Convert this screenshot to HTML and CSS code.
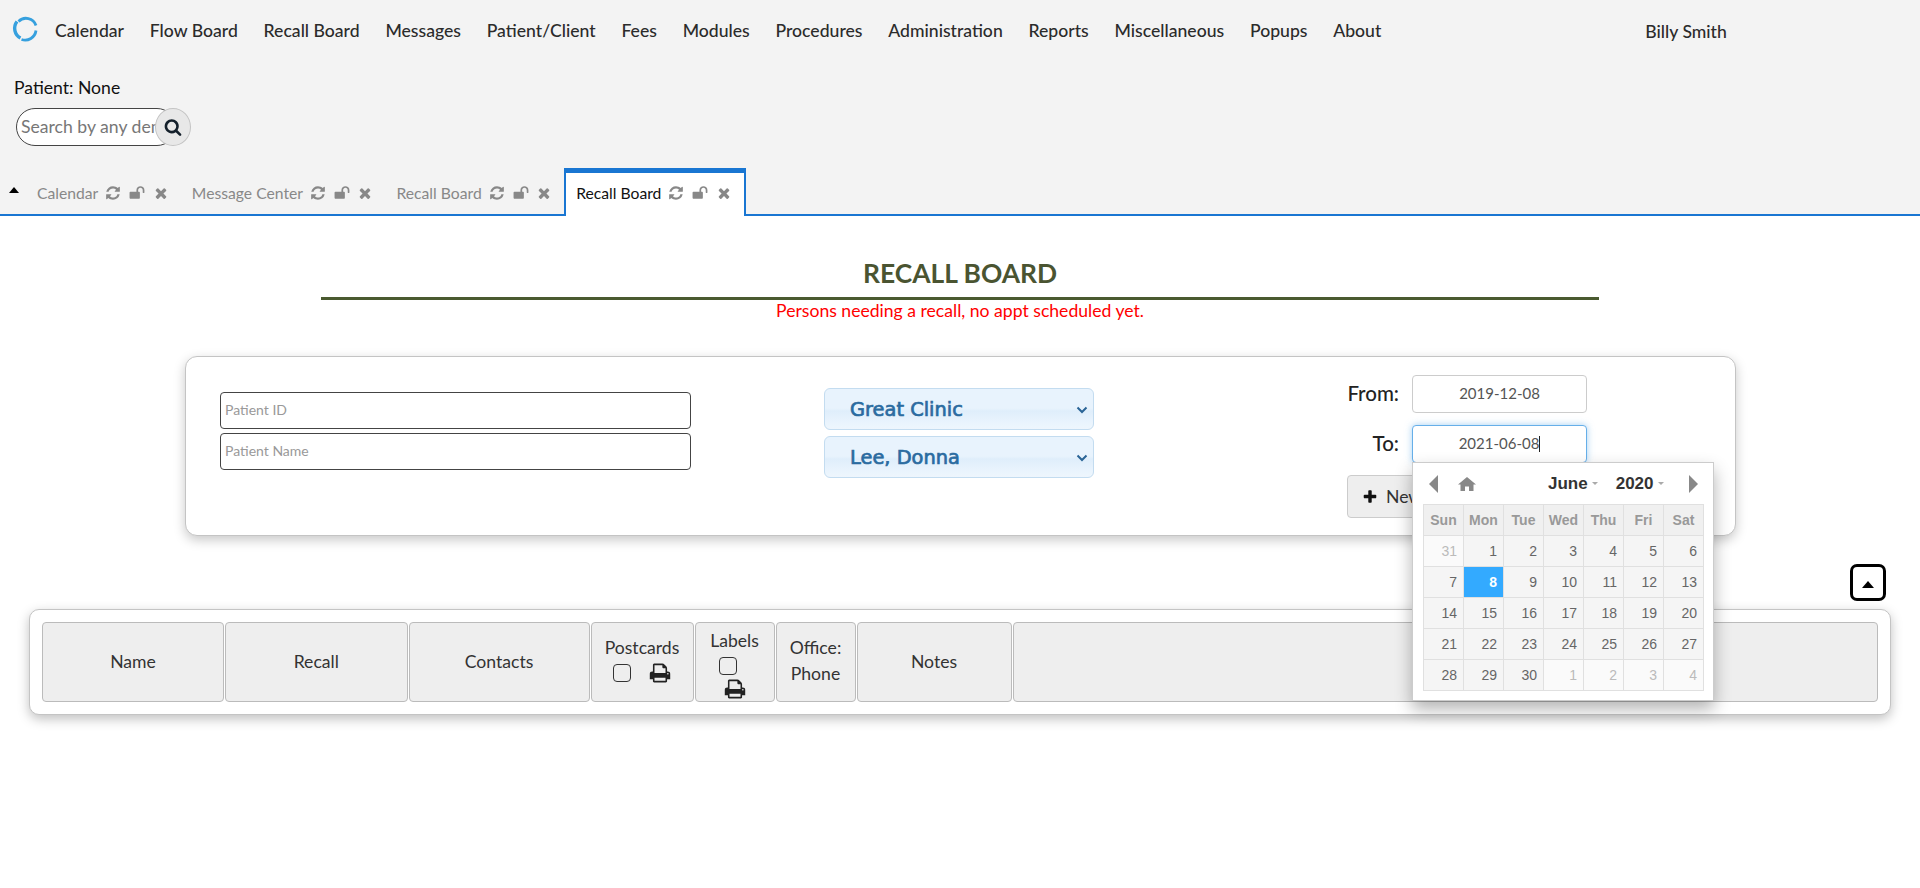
FILE: index.html
```html
<!DOCTYPE html>
<html lang="en">
<head>
<meta charset="utf-8">
<title>Recall Board</title>
<link rel="stylesheet" href="styles.css">
</head>
<body>
<svg class="defs" aria-hidden="true">
  <symbol id="i-refresh" viewBox="0 0 1792 1792"><path d="M1639 1056q0 5-1 7-64 268-268 434.5t-478 166.5q-146 0-282.5-55t-243.5-157l-129 129q-19 19-45 19t-45-19-19-45v-448q0-26 19-45t45-19h448q26 0 45 19t19 45-19 45l-137 137q71 66 161 102t187 36q134 0 250-65t186-179q11-17 53-117 8-23 30-23h192q13 0 22.5 9.5t9.5 22.5zm25-800v448q0 26-19 45t-45 19h-448q-26 0-45-19t-19-45 19-45l138-138q-148-137-349-137-134 0-250 65t-186 179q-11 17-53 117-8 23-30 23h-199q-13 0-22.5-9.5t-9.5-22.5v-7q65-268 270-434.5t480-166.5q146 0 284 55.5t245 156.5l130-129q19-19 45-19t45 19 19 45z"/></symbol>
  <symbol id="i-unlock" viewBox="0 0 1792 1792"><path d="M1728 576v256q0 26-19 45t-45 19h-64q-26 0-45-19t-19-45v-256q0-106-75-181t-181-75-181 75-75 181v192h96q40 0 68 28t28 68v576q0 40-28 68t-68 28h-960q-40 0-68-28t-28-68v-576q0-40 28-68t68-28h672v-192q0-185 131.5-316.5t316.5-131.5 316.5 131.5 131.5 316.5z"/></symbol>
  <symbol id="i-times" viewBox="0 0 1792 1792"><path d="M1490 1322q0 40-28 68l-136 136q-28 28-68 28t-68-28l-294-294-294 294q-28 28-68 28t-68-28l-136-136q-28-28-28-68t28-68l294-294-294-294q-28-28-28-68t28-68l136-136q28-28 68-28t68 28l294 294 294-294q28-28 68-28t68 28l136 136q28 28 28 68t-28 68l-294 294 294 294q28 28 28 68z"/></symbol>
  <symbol id="i-search" viewBox="0 0 1792 1792"><path d="M1216 832q0-185-131.5-316.5t-316.5-131.5-316.5 131.5-131.5 316.5 131.5 316.5 316.5 131.5 316.5-131.5 131.5-316.5zm512 832q0 52-38 90t-90 38q-54 0-90-38l-343-342q-179 124-399 124-143 0-273.5-55.5t-225-150-150-225-55.5-273.5 55.5-273.5 150-225 225-150 273.5-55.5 273.5 55.5 225 150 150 225 55.5 273.5q0 220-124 399l343 343q37 37 37 90z"/></symbol>
  <symbol id="i-print" viewBox="0 0 1792 1792"><path d="M448 1536h896v-256h-896v256zm0-640h896v-384h-160q-40 0-68-28t-28-68v-160h-640v640zm1152 64q0-26-19-45t-45-19-45 19-19 45 19 45 45 19 45-19 19-45zm128 0v416q0 13-9.5 22.5t-22.5 9.5h-224v160q0 40-28 68t-68 28h-960q-40 0-68-28t-28-68v-160h-224q-13 0-22.5-9.5t-9.5-22.5v-416q0-79 56.5-135.5t135.5-56.5h64v-544q0-40 28-68t68-28h672q40 0 88 20t76 48l152 152q28 28 48 76t20 88v256h64q79 0 135.5 56.5t56.5 135.5z"/></symbol>
  <symbol id="i-plus" viewBox="0 0 1792 1792"><path d="M1600 736v192q0 40-28 68t-68 28h-416v416q0 40-28 68t-68 28h-192q-40 0-68-28t-28-68v-416h-416q-40 0-68-28t-28-68v-192q0-40 28-68t68-28h416v-416q0-40 28-68t68-28h192q40 0 68 28t28 68v416h416q40 0 68 28t28 68z"/></symbol>
</svg>

<header class="top">
  <nav class="nav">
    <svg class="logo" viewBox="0 0 26 26"><g fill="none" stroke="#36a0de"><path d="M6.500 5.500A10.500 10.500 0 0 1 24 9.500" stroke-width="2.800"/><path d="M5 5.500A11 11 0 0 0 8.500 22" stroke-width="3.400"/><path d="M9.500 23.500A11 11 0 0 0 24 14.500" stroke-width="2.800"/></g></svg>
    <ul class="menu">
      <li>Calendar</li><li>Flow Board</li><li>Recall Board</li><li>Messages</li><li>Patient/Client</li><li>Fees</li><li>Modules</li><li>Procedures</li><li>Administration</li><li>Reports</li><li>Miscellaneous</li><li>Popups</li><li>About</li>
    </ul>
    <span class="user">Billy Smith</span>
  </nav>
  <div class="patient">Patient: None</div>
  <div class="search">
    <input class="search-input" type="text" placeholder="Search by any demographics">
    <button class="search-btn" type="button"><svg class="ic-search"><use href="#i-search"/></svg></button>
  </div>
  <div class="tabs">
    <span class="tabs-toggle"></span>
    <div class="tab">Calendar<svg class="ic ic-r"><use href="#i-refresh"/></svg><svg class="ic ic-l"><use href="#i-unlock"/></svg><svg class="ic ic-x"><use href="#i-times"/></svg></div>
    <div class="tab">Message Center<svg class="ic ic-r"><use href="#i-refresh"/></svg><svg class="ic ic-l"><use href="#i-unlock"/></svg><svg class="ic ic-x"><use href="#i-times"/></svg></div>
    <div class="tab">Recall Board<svg class="ic ic-r"><use href="#i-refresh"/></svg><svg class="ic ic-l"><use href="#i-unlock"/></svg><svg class="ic ic-x"><use href="#i-times"/></svg></div>
    <div class="tab tab-active">Recall Board<svg class="ic ic-r"><use href="#i-refresh"/></svg><svg class="ic ic-l"><use href="#i-unlock"/></svg><svg class="ic ic-x"><use href="#i-times"/></svg></div>
  </div>
</header>

<main>
  <div class="title-block">
    <h1 class="title">RECALL BOARD</h1>
    <p class="subtitle">Persons needing a recall, no appt scheduled yet.</p>
  </div>

  <section class="filters">
    <div class="col-patient">
      <input class="text-in" type="text" placeholder="Patient ID">
      <input class="text-in" type="text" placeholder="Patient Name">
    </div>
    <div class="col-select">
      <div class="fake-select">Great Clinic<svg class="chev" viewBox="0 0 12 8"><path d="M1.500 1.500 6 6l4.500-4.500" fill="none" stroke="#2a6496" stroke-width="2"/></svg></div>
      <div class="fake-select">Lee, Donna<svg class="chev" viewBox="0 0 12 8"><path d="M1.500 1.500 6 6l4.500-4.500" fill="none" stroke="#2a6496" stroke-width="2"/></svg></div>
    </div>
    <div class="col-dates">
      <div class="date-row"><label class="date-label">From:</label><div class="date-in">2019-12-08</div></div>
      <div class="date-row date-row-to"><label class="date-label">To:</label><div class="date-in date-in-focus">2021-06-08<span class="cursor"></span></div>
        <div class="cal">
          <div class="cal-head">
            <span class="tri tri-l"></span>
            <svg class="cal-home" viewBox="0 0 18 14"><path d="M9 0 0 7.500h2.500V14h4.500V9.500h4V14h4.500V7.500H18z" fill="#888"/></svg>
            <span class="cal-month">June<span class="mini"></span></span>
            <span class="cal-year">2020<span class="mini"></span></span>
            <span class="tri tri-r"></span>
          </div>
          <table class="cal-table">
            <thead><tr><th>Sun</th><th>Mon</th><th>Tue</th><th>Wed</th><th>Thu</th><th>Fri</th><th>Sat</th></tr></thead>
            <tbody>
              <tr><td class="off">31</td><td>1</td><td>2</td><td>3</td><td>4</td><td>5</td><td>6</td></tr>
              <tr><td>7</td><td class="sel">8</td><td>9</td><td>10</td><td>11</td><td>12</td><td>13</td></tr>
              <tr><td>14</td><td>15</td><td>16</td><td>17</td><td>18</td><td>19</td><td>20</td></tr>
              <tr><td>21</td><td>22</td><td>23</td><td>24</td><td>25</td><td>26</td><td>27</td></tr>
              <tr><td>28</td><td>29</td><td>30</td><td class="off">1</td><td class="off">2</td><td class="off">3</td><td class="off">4</td></tr>
            </tbody>
          </table>
        </div>
      </div>
      <button class="new-btn" type="button"><svg class="ic-plus"><use href="#i-plus"/></svg>New Recall</button>
    </div>
  </section>

  <div class="toggle-row"><button class="toggle-btn" type="button"><span class="toggle-caret"></span></button></div>

  <section class="board">
    <div class="board-head">
      <div class="hc">Name</div>
      <div class="hc">Recall</div>
      <div class="hc">Contacts</div>
      <div class="hc hc-post">
        <span>Postcards</span>
        <span class="hc-tools"><input class="chk" type="checkbox"><svg class="ic-print"><use href="#i-print"/></svg></span>
      </div>
      <div class="hc hc-labels">
        <span>Labels</span>
        <input class="chk" type="checkbox">
        <svg class="ic-print"><use href="#i-print"/></svg>
      </div>
      <div class="hc hc-office">Office:<br>Phone</div>
      <div class="hc">Notes</div>
      <div class="hc"></div>
    </div>
  </section>
</main>
</body>
</html>
```
FILE: styles.css
```css
* { box-sizing: border-box; }
html, body { margin: 0; padding: 0; }
body { font-family: Lato, "Liberation Sans", sans-serif; font-size: 17.6px; color: #212529; background: #fff; height: 888px; overflow: hidden; }
.defs { display: none; }

/* header */
.top { background: #f3f3f3; height: 216px; border-bottom: 2px solid #1976d2; }
.nav { display: flex; align-items: center; height: 62px; padding-left: 12px; }
.logo { width: 26px; height: 26px; margin-top: -4px; }
.menu { display: flex; list-style: none; margin: 0 0 0 17px; padding: 0; gap: 25.800px; }
.menu li { color: #2b2b2b; font-weight: 500; white-space: nowrap; line-height: 24px; }
.user { margin-left: 264px; font-weight: 500; color: #2b2b2b; }
.patient { margin: 14px 0 0 14px; line-height: 24px; height: 24px; color: #111; }
.search { display: flex; margin: 8px 0 0 16px; height: 38px; }
.search-input { width: 160px; height: 38px; border: 1px solid #444; border-radius: 19px; padding: 0 4px 2px 4px; font: 17.6px Lato, sans-serif; background: #fff; outline: none; }
.search-input::placeholder { color: #777; opacity: 1; }
.search-btn { width: 36px; height: 38px; margin: 0 0 0 -21px; border-radius: 50%; border: 1px solid #c4c4c4; background: #e8e8e8; padding: 0; display: flex; align-items: center; justify-content: center; }
.ic-search { width: 18px; height: 18px; fill: #14202b; }

/* tabs */
.tabs { display: flex; align-items: flex-end; height: 46px; margin-top: 22px; padding-left: 26px; }
.tabs-toggle { width: 0; height: 0; border-left: 5.500px solid transparent; border-right: 5.500px solid transparent; border-bottom: 6px solid #000; margin: 0 6px 21px -17px; }
.tab { display: flex; align-items: center; height: 46px; padding: 3px 11px 0 12px; color: #888; font-size: 15.700px; white-space: nowrap; }
.tab-active { height: 48px; margin: 0 0 -2px 1px; padding: 0 12px 4px 10px; background: #fff; color: #111; border: 2px solid #1976d2; border-top-width: 5px; border-bottom: 0; }
.ic { fill: #888; height: 16px; display: block; }
.ic-r { width: 16px; margin-left: 7px; }
.ic-l { width: 16px; margin-left: 8px; }
.ic-x { width: 16px; margin-left: 7.500px; }

/* title */
.title-block { margin: 39px 321px 0; text-align: center; }
.title { margin: 0; font-size: 26.400px; line-height: 36px; height: 45px; font-weight: 700; color: #4a5431; border-bottom: 3px solid #4a5a30; }
.subtitle { margin: 1px 0 0; font-size: 17.6px; line-height: 20px; color: #f00; }

/* filter panel */
.filters { display: flex; align-items: flex-start; height: 180px; margin: 35px 184px 0 185px; padding-left: 34px; border: 1px solid #c4c4c4; border-radius: 12px; background: #fff; box-shadow: 0 4px 12px rgba(0, 0, 0, 0.22); }
.col-patient { display: flex; flex-direction: column; gap: 4px; width: 471px; margin-top: 35px; }
.text-in { width: 471px; height: 37px; border: 1px solid #444; border-radius: 4px; padding: 0 4px 2px; font: 14px Lato, sans-serif; background: #fff; outline: none; }
.text-in::placeholder { color: #999; opacity: 1; }
.col-select { display: flex; flex-direction: column; gap: 6px; width: 270px; margin: 31px 0 0 133px; }
.fake-select { position: relative; height: 42px; padding-left: 25px; border: 1px solid #c3dcf0; border-radius: 6px; font: 19.400px/41px "DejaVu Sans", sans-serif; -webkit-text-stroke: 0.7px #2a6ba0; color: #2a6ba0; background: linear-gradient(#e8f3fd 0, #e8f3fd 48%, #dfeefb 55%, #e8f3fd 80%, #eef6fd 100%); }
.chev { position: absolute; right: 5px; top: 17px; width: 12px; height: 8px; }
.col-dates { width: 240px; margin: 18px 0 0 253px; }
.date-row { display: flex; align-items: center; height: 38px; position: relative; }
.date-row-to { margin-top: 12px; }
.date-label { width: 52px; margin: -2px 13px 0 0; text-align: right; font-size: 20.500px; font-weight: 500; color: #222; white-space: nowrap; }
.date-in { width: 175px; height: 38px; line-height: 34px; text-align: center; border: 1px solid #ccc; border-radius: 4px; font-size: 15px; color: #555; background: #fff; }
.date-in-focus { border-color: #66afe9; box-shadow: 0 0 7px rgba(102, 175, 233, 0.6); }
.cursor { display: inline-block; width: 1px; height: 16px; background: #222; vertical-align: -3px; }
.new-btn { display: flex; align-items: center; width: 200px; height: 43px; margin-top: 12px; padding: 0 14px; border: 1px solid #ccc; border-radius: 4px; background: #eee; font: 17.6px Lato, sans-serif; color: #333; }
.ic-plus { width: 16px; height: 16px; margin-right: 8px; fill: #111; }

/* calendar overlay */
.cal { position: absolute; left: 65px; top: 37px; width: 302px; height: 239px; z-index: 5; padding: 0 10px; background: #fff; border: 1px solid #ccc; box-shadow: 0 8px 16px rgba(0, 0, 0, 0.3); font-family: "Liberation Sans", Arial, sans-serif; }
.cal-head { display: flex; align-items: center; height: 41px; padding-left: 6px; }
.tri { width: 0; height: 0; border-top: 9px solid transparent; border-bottom: 9px solid transparent; }
.tri-l { border-right: 9px solid #888; }
.tri-r { border-left: 9px solid #888; margin-left: 25px; }
.cal-home { width: 18px; height: 14px; margin-left: 20px; }
.cal-month, .cal-year { font-size: 17px; font-weight: 700; color: #333; display: flex; align-items: center; }
.cal-month { margin-left: 72px; }
.cal-year { margin-left: 18px; }
.mini { width: 0; height: 0; margin-left: 4px; border-left: 3.500px solid transparent; border-right: 3.500px solid transparent; border-top: 3px solid #aaa; }
.cal-table { border-collapse: collapse; table-layout: fixed; width: 281px; font-size: 14px; }
.cal-table th, .cal-table td { width: 40px; height: 31px; padding: 0 6px 1px 0; border: 1px solid #e0e0e0; text-align: right; font-weight: 400; color: #666; background: #f5f5f5; }
.cal-table th { padding: 0; text-align: center; font-weight: 700; color: #999; background: #f0f0f0; }
.cal-table td.off { color: #bbb; background: #fafafa; }
.cal-table td.sel { color: #fff; font-weight: 700; background: #33aaff; }

/* toggle */
.toggle-row { display: flex; justify-content: flex-end; margin-top: 28px; padding-right: 34px; }
.toggle-btn { width: 36px; height: 37px; border: 3px solid #000; border-radius: 7px; background: #fff; padding: 0; display: flex; align-items: center; justify-content: center; }
.toggle-caret { width: 0; height: 0; margin-top: 3px; border-left: 6.500px solid transparent; border-right: 6.500px solid transparent; border-bottom: 7px solid #000; }

/* board */
.board { margin: 8px 29.500px 0 29px; height: 106px; padding: 12px; border: 1px solid #c4c4c4; border-radius: 10px; background: #fff; box-shadow: 0 4px 12px rgba(0, 0, 0, 0.25); }
.board-head { display: grid; grid-template-columns: 182px 182.500px 181px 103px 80px 80px 155px 1fr; gap: 1px; height: 80px; }
.hc { display: flex; flex-direction: column; align-items: center; justify-content: center; background: #eee; border: 1px solid #bbb; border-radius: 4px; line-height: 24px; color: #333; text-align: center; }
.hc-post { justify-content: flex-start; padding-top: 13px; }
.hc-tools { display: flex; align-items: center; gap: 18px; height: 20px; margin-top: 3px; margin-left: -1px; }
.hc-labels { justify-content: flex-start; padding-top: 6px; }
.hc-labels .chk { margin: 4px 14px 0 0; flex: none; }
.hc-labels .ic-print { margin-top: 3px; flex: none; }
.hc-office { display: block; padding-top: 12px; line-height: 26px; }
.chk { appearance: none; width: 18px; height: 18px; margin: 0; border: 1.500px solid #333; border-radius: 4px; background: transparent; }
.ic-print { width: 22px; height: 22px; fill: #222; display: block; }
```
